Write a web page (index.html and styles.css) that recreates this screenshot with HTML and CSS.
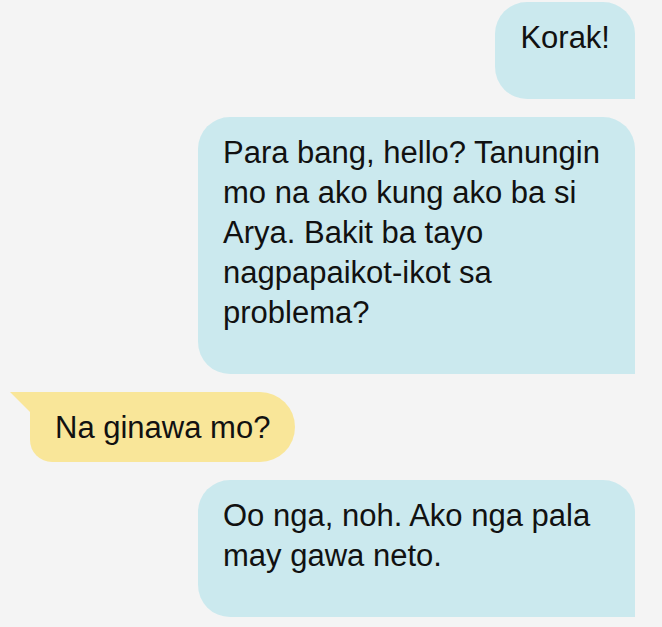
FILE: index.html
```html
<!DOCTYPE html>
<html>
<head>
    <title>Chat</title>
    <link rel="stylesheet" href="styles.css">
</head>
<body>
    <div class="chat">
        <div class="msg sent">Korak!</div>
        <div class="msg sent">Para bang, hello? Tanungin mo na ako kung ako ba si Arya. Bakit ba tayo nagpapaikot-ikot sa problema?</div>
        <div class="msg received">Na ginawa mo?</div>
        <div class="msg sent">Oo nga, noh. Ako nga pala may gawa neto.</div>
    </div>
</body>
</html>
```

FILE: styles.css
```css
body {
    margin: 0;
    background-color: #f4f4f4;
    font-family: "Liberation Sans", Arial, sans-serif;
}
.chat {
    display: flex;
    flex-direction: column;
    gap: 18px;
    padding: 2px 27px 10px 30px;
}
.msg {
    max-width: 387px;
    font-size: 31px;
    line-height: 40px;
    color: #111;
}
.sent {
    align-self: flex-end;
    background-color: #cbe9ee;
    padding: 16px 25px 41px 25px;
    border-radius: 32px 32px 0 32px;
}
.received {
    position: relative;
    align-self: flex-start;
    background-color: #f9e699;
    padding: 16px 25px 14px 25px;
    border-radius: 0 35px 35px 22px;
}
.received::before {
    content: "";
    position: absolute;
    left: -20px;
    top: 0;
    width: 0;
    height: 0;
    border-top: 20px solid #f9e699;
    border-left: 20px solid transparent;
}
```
